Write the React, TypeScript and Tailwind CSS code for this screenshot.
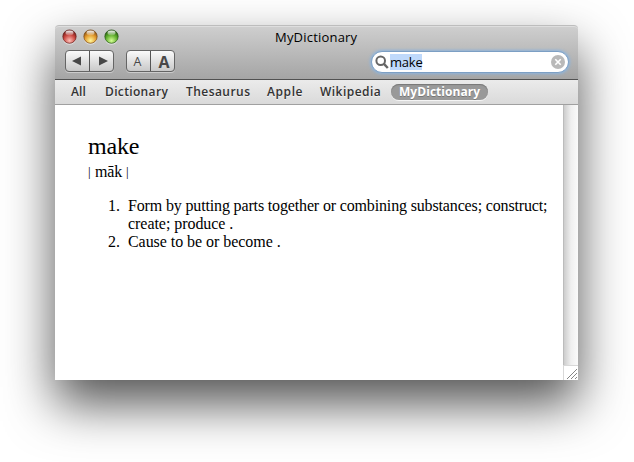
import React from "react";

const TABS = [
  { label: "All", style: "w-[34px] tracking-[0.1px]" },
  { label: "Dictionary", style: "w-[81px] tracking-[0.35px]" },
  { label: "Thesaurus", style: "w-[81px] tracking-[0.45px]" },
  { label: "Apple", style: "w-[53px] tracking-[0.6px]" },
  { label: "Wikipedia", style: "w-[71px] tracking-[0.45px]" },
];

const LIGHTS = [
  { id: "close", edge: "#5e1512", mid: "#c9463f", glow: "#ffc0b8" },
  { id: "minimize", edge: "#74400c", mid: "#e39a2c", glow: "#fff79a" },
  { id: "zoom", edge: "#1d4d0c", mid: "#5fae2c", glow: "#d6ff96" },
];

function TrafficLight({ id, edge, mid, glow }: { id: string; edge: string; mid: string; glow: string }) {
  return (
    <svg width="15" height="16" viewBox="0 0 15 16" className="block">
      <defs>
        <radialGradient id={id} cx="0.5" cy="0.8" r="0.8">
          <stop offset="0" stopColor={glow} />
          <stop offset="0.55" stopColor={mid} />
          <stop offset="1" stopColor={edge} />
        </radialGradient>
        <linearGradient id={id + "-shine"} x1="0" y1="0" x2="0" y2="1">
          <stop offset="0" stopColor="#fff" stopOpacity="0.95" />
          <stop offset="1" stopColor="#fff" stopOpacity="0.15" />
        </linearGradient>
      </defs>
      <circle cx="7.5" cy="8.7" r="7" fill="#fff" opacity="0.5" />
      <circle cx="7.5" cy="7.6" r="6.7" fill={`url(#${id})`} stroke={edge} strokeOpacity="0.75" strokeWidth="0.9" />
      <ellipse cx="7.5" cy="4" rx="4" ry="2.4" fill={`url(#${id}-shine)`} />
    </svg>
  );
}

function ButtonPair({ left, right }: { left: React.ReactNode; right: React.ReactNode }) {
  return (
    <div className="flex h-[22px] w-[49px] overflow-hidden rounded-[4px] border border-[#656565] bg-linear-to-b from-[#fafafa] to-[#c9c9c9] text-[#484848] shadow-[0_1px_0_rgba(255,255,255,0.4)]">
      <button className="flex w-[24px] items-center justify-center border-r border-[#555]">{left}</button>
      <button className="flex flex-1 items-center justify-center">{right}</button>
    </div>
  );
}

export default function App() {
  return (
    <div className="h-[462px] w-[634px] overflow-hidden bg-white pt-[25px] pl-[55px]">
      <main className="flex h-[355px] w-[523px] flex-col rounded-t-[4px] bg-white font-['Open_Sans','Noto_Sans',sans-serif] shadow-[0_24px_50px_rgba(0,0,0,0.68)]">
        <header className="h-[55px] rounded-t-[4px] border-t border-b border-t-[#bdbdbd] border-b-[#515151] bg-linear-to-b from-[#cfcfcf] to-[#a5a5a5] shadow-[inset_0_1px_0_#dedede]">
          <div className="flex h-[24px] items-start pt-[3px] pl-[7px]">
            <div className="flex gap-[6px]">
              {LIGHTS.map((l) => (
                <TrafficLight key={l.id} {...l} />
              ))}
            </div>
            <h1 className="-mt-px ml-[156px] text-[13px] leading-[18px] tracking-[0.2px] whitespace-nowrap text-black">MyDictionary</h1>
          </div>
          <div className="flex pl-[10px]">
            <ButtonPair
              left={<svg width="9" height="10" viewBox="0 0 9 10" className="mr-[3px]"><path d="M9 0.5V9.5L0 5Z" fill="currentColor" /></svg>}
              right={<svg width="9" height="10" viewBox="0 0 9 10" className="ml-[3px]"><path d="M0 0.5V9.5L9 5Z" fill="currentColor" /></svg>}
            />
            <div className="w-[12px]" />
            <ButtonPair
              left={<span className="pt-[2px] pr-[2px] text-[12.5px] leading-none">A</span>}
              right={<span className="pt-px pl-[3px] text-[16px] leading-none font-bold">A</span>}
            />
            <div className="mt-px ml-[196px] flex h-[22px] w-[198px] items-center rounded-full border border-[#7c9fc4] bg-white pr-[3px] pl-[3px] shadow-[0_0_3px_1px_#8db4dc]">
              <svg width="14" height="14" viewBox="0 0 14 14" fill="none" stroke="#666">
                <circle cx="5.7" cy="5.7" r="4.3" strokeWidth="2" />
                <path d="M8.7 8.7L12.8 13" strokeWidth="2.4" />
              </svg>
              <span className="ml-px h-[16px] w-[32px] bg-[#bfd9fb] text-[13px] leading-[16px] tracking-[-0.2px] whitespace-nowrap text-black">make</span>
              <svg className="ml-auto" width="14" height="14" viewBox="0 0 14 14">
                <circle cx="7" cy="7" r="7" fill="#b9b9b9" />
                <path d="M4.3 4.3L9.7 9.7M9.7 4.3L4.3 9.7" stroke="#fff" strokeWidth="1.6" />
              </svg>
            </div>
          </div>
        </header>
        <nav className="flex h-[25px] items-start border-b border-[#a0a0a0] bg-linear-to-b from-[#ebebeb] to-[#dadada] pt-[4px] pl-[16px] text-[12px] leading-[16px] font-semibold text-[#333]">
          {TABS.map((t) => (
            <a key={t.label} className={"whitespace-nowrap [text-shadow:0_1px_0_rgba(255,255,255,0.6)] " + t.style}>
              {t.label}
            </a>
          ))}
          <a className="h-[16px] w-[97px] rounded-full bg-[#999] pl-[8px] font-bold tracking-[0.05px] whitespace-nowrap text-white shadow-[inset_0_1px_1px_#777,0_1px_0_#f5f5f5] [text-shadow:0_1px_0_#777]">
            MyDictionary
          </a>
        </nav>
        <div className="flex min-h-0 flex-1">
          <article className="flex-1 pt-[27px] pl-[33px] font-['Liberation_Serif',serif] text-black">
            <h2 className="text-[24px] leading-[28px] tracking-[-0.15px]">make</h2>
            <p className="mt-[3px] flex items-center text-[16px] leading-[18px] tracking-[-0.15px]">
              <span className="w-[7px] text-[13px]">|</span>
              <span>māk</span>
              <span className="pl-[4px] text-[13px]">|</span>
            </p>
            <ol className="mt-[16px] text-[16px] leading-[18px]">
              <li className="flex">
                <span className="w-[40px] pl-[20px]">1.</span>
                <span className="whitespace-nowrap">
                  <span className="tracking-[-0.15px]">Form by putting parts together or combining substances; construct;</span>
                  <br />
                  <span className="tracking-[-0.05px]">create; produce .</span>
                </span>
              </li>
              <li className="flex">
                <span className="w-[40px] pl-[20px]">2.</span>
                <span className="tracking-[-0.05px]">Cause to be or become .</span>
              </li>
            </ol>
          </article>
          <aside className="flex w-[15px] flex-col">
            <div className="flex-1 border-l border-[#bcbcbc] bg-linear-to-r from-[#cdcdcd] via-[#efefef] to-[#fafafa]" />
            <div className="h-[15px] border-t border-l border-[#d8d8d8] bg-white">
              <svg width="14" height="14" viewBox="0 0 14 14" stroke="#858585" strokeWidth="1">
                <path d="M3 13L13 3M7 13L13 7M11 13L13 11" />
              </svg>
            </div>
          </aside>
        </div>
      </main>
    </div>
  );
}
